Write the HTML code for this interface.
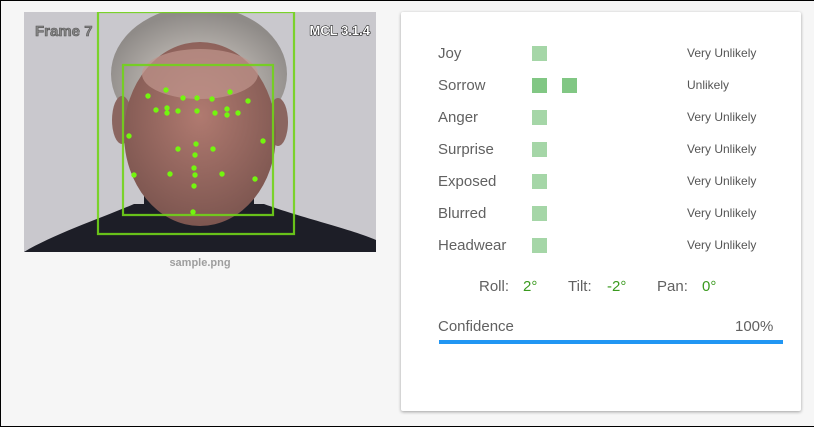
<!DOCTYPE html>
<html><head><style>
*{margin:0;padding:0;box-sizing:border-box}
html,body{width:814px;height:427px;overflow:hidden}
body{background:#f6f6f6;position:relative;font-family:"Liberation Sans",sans-serif}
.abs{position:absolute}
.card{left:401px;top:12px;width:400px;height:399px;background:#fff;box-shadow:0 1px 3px rgba(0,0,0,.35);border-radius:2px}
.lbl{font-size:15px;color:#616161;left:438px}
.sq{width:15px;height:15px;background:#a5d6a7}
.rt{font-size:12px;color:#555;left:687px}
.g{color:#3a9a1f}
</style></head><body>
<div class="abs" style="left:0;top:0;width:814px;height:427px;border-top:1px solid #000;border-left:1px solid #000;border-bottom:1px solid #000"></div>
<svg class="abs" style="left:24px;top:12px" width="352" height="240" viewBox="0 0 352 240">
<defs>
<radialGradient id="f" cx="50%" cy="40%" r="60%"><stop offset="0" stop-color="#b07a70"/><stop offset="1" stop-color="#7d5650"/></radialGradient>
<radialGradient id="h" cx="50%" cy="60%" r="55%"><stop offset="0.5" stop-color="#b5b0ab"/><stop offset="1" stop-color="#8f8b88"/></radialGradient>
</defs>
<rect width="352" height="240" fill="#c9c8cd"/>
<path d="M0 240 C30 222 80 205 110 192 L240 192 C275 205 330 218 352 228 L352 240Z" fill="#1d1e27"/>
<rect x="120" y="170" width="110" height="45" fill="#1d1e27"/>
<ellipse cx="175" cy="62" rx="88" ry="68" fill="url(#h)"/>
<ellipse cx="98" cy="108" rx="10" ry="24" fill="#8b6660"/>
<ellipse cx="254" cy="110" rx="10" ry="24" fill="#8b6660"/>
<ellipse cx="176" cy="122" rx="76" ry="92" fill="url(#f)"/>
<ellipse cx="176" cy="62" rx="58" ry="25" fill="#c0968d" opacity=".7"/>
<path d="M74 0 H270 V222 H74Z M99 53 H249 V203 H99Z" fill="none" stroke="#71d31a" stroke-width="2.2" opacity=".9"/>
<g fill="#73f50f">
<circle cx="124" cy="84" r="2.7"/><circle cx="142" cy="78" r="2.7"/><circle cx="159" cy="86" r="2.7"/><circle cx="173" cy="86" r="2.7"/><circle cx="188" cy="87" r="2.7"/><circle cx="206" cy="80" r="2.7"/><circle cx="224" cy="89" r="2.7"/><circle cx="132" cy="98" r="2.7"/><circle cx="143" cy="96" r="2.7"/><circle cx="143" cy="101" r="2.7"/><circle cx="154" cy="99" r="2.7"/><circle cx="173" cy="99" r="2.7"/><circle cx="191" cy="101" r="2.7"/><circle cx="203" cy="97" r="2.7"/><circle cx="203" cy="103" r="2.7"/><circle cx="214" cy="101" r="2.7"/><circle cx="105" cy="124" r="2.7"/><circle cx="239" cy="129" r="2.7"/><circle cx="154" cy="137" r="2.7"/><circle cx="172" cy="132" r="2.7"/><circle cx="189" cy="137" r="2.7"/><circle cx="171" cy="143" r="2.7"/><circle cx="170" cy="156" r="2.7"/><circle cx="110" cy="163" r="2.7"/><circle cx="146" cy="162" r="2.7"/><circle cx="171" cy="163" r="2.7"/><circle cx="198" cy="162" r="2.7"/><circle cx="231" cy="167" r="2.7"/><circle cx="170" cy="174" r="2.7"/><circle cx="169" cy="200" r="2.7"/>
</g>
<text x="11" y="24" font-family="Liberation Sans" font-weight="bold" font-size="15" fill="#888" stroke="#555" stroke-width=".6">Frame 7</text>
<text x="346" y="23" text-anchor="end" font-family="Liberation Sans" font-weight="bold" font-size="13" fill="#fff" stroke="#000" stroke-width="1" paint-order="stroke">MCL 3.1.4</text>
</svg>
<div class="abs" style="left:24px;top:257px;width:352px;text-align:center;font-size:11px;font-weight:bold;color:#9e9e9e">sample.png</div>
<div class="abs card"></div>
<div class="abs lbl" style="top:45px">Joy</div>
<div class="abs lbl" style="top:77px">Sorrow</div>
<div class="abs lbl" style="top:109px">Anger</div>
<div class="abs lbl" style="top:141px">Surprise</div>
<div class="abs lbl" style="top:173px">Exposed</div>
<div class="abs lbl" style="top:205px">Blurred</div>
<div class="abs lbl" style="top:237px">Headwear</div>
<div class="abs sq" style="left:532px;top:46px"></div>
<div class="abs sq" style="left:532px;top:78px;background:#81c784"></div>
<div class="abs sq" style="left:562px;top:78px;background:#81c784"></div>
<div class="abs sq" style="left:532px;top:110px"></div>
<div class="abs sq" style="left:532px;top:142px"></div>
<div class="abs sq" style="left:532px;top:174px"></div>
<div class="abs sq" style="left:532px;top:206px"></div>
<div class="abs sq" style="left:532px;top:238px"></div>
<div class="abs rt" style="top:46px">Very Unlikely</div>
<div class="abs rt" style="top:78px">Unlikely</div>
<div class="abs rt" style="top:110px">Very Unlikely</div>
<div class="abs rt" style="top:142px">Very Unlikely</div>
<div class="abs rt" style="top:174px">Very Unlikely</div>
<div class="abs rt" style="top:206px">Very Unlikely</div>
<div class="abs rt" style="top:238px">Very Unlikely</div>
<div class="abs lbl" style="top:278px;left:479px">Roll:</div>
<div class="abs lbl g" style="top:278px;left:523px">2°</div>
<div class="abs lbl" style="top:278px;left:568px">Tilt:</div>
<div class="abs lbl g" style="top:278px;left:607px">-2°</div>
<div class="abs lbl" style="top:278px;left:657px">Pan:</div>
<div class="abs lbl g" style="top:278px;left:702px">0°</div>
<div class="abs lbl" style="top:318px">Confidence</div>
<div class="abs lbl" style="top:318px;left:735px">100%</div>
<div class="abs" style="left:439px;top:340px;width:344px;height:4px;background:#2196f3"></div>
</body></html>
